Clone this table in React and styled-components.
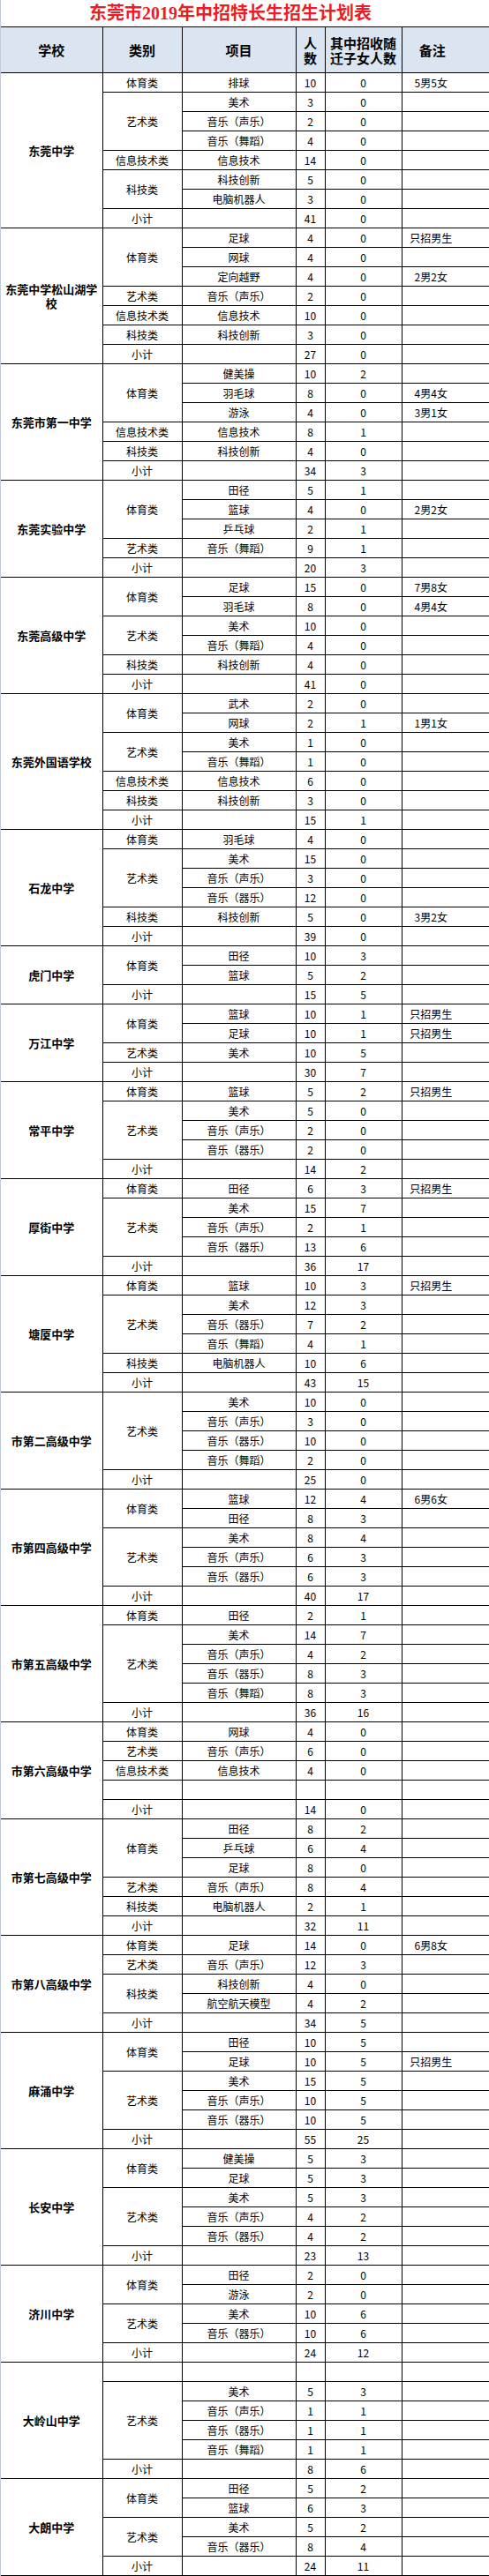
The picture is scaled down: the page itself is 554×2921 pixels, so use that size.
import React from "react";
import styled, { createGlobalStyle } from "styled-components";

const GlobalStyle = createGlobalStyle`
  html, body {
    margin: 0;
    padding: 0;
    background: #fff;
  }
`;

const Page = styled.div`
  width: 554px;
  border-left: 1px solid #c3ccd6;
  box-sizing: border-box;
`;

const Table = styled.table`
  width: 553px;
  border-collapse: collapse;
  table-layout: fixed;
  font-family: "Noto Sans CJK SC", sans-serif;
  color: #000;
`;

const TitleCell = styled.td`
  height: 30px;
  padding: 0 33px 0 0;
  text-align: center;
  vertical-align: middle;
  font-family: "Liberation Serif", "Noto Sans CJK SC", serif;
  font-weight: bold;
  font-size: 20px;
  line-height: 22px;
  color: #ee1c25;
  border-bottom: 1px solid #000;
`;

const HeadRow = styled.tr`
  height: 52px;
  background: #dbe5f1;
`;

const HeadCell = styled.th`
  padding: 0 ${(p) => (p.$last ? "33px" : "3px")} 0 3px;
  border: 1px solid #000;
  border-left: ${(p) => (p.$first ? "none" : "1px solid #000")};
  border-right: ${(p) => (p.$last ? "none" : "1px solid #000")};
  font-size: 15px;
  font-weight: bold;
  line-height: 17px;
  text-align: center;
  vertical-align: middle;
  word-break: break-all;
`;

const Row = styled.tr`
  height: 22px;
`;

const SchoolCell = styled.td`
  padding: 0 2px;
  border-top: 1px solid #000;
  border-bottom: 1px solid #000;
  border-right: 1px solid #000;
  font-size: 13px;
  font-weight: bold;
  line-height: 16px;
  text-align: center;
  vertical-align: middle;
  word-break: break-all;
`;

const Cell = styled.td`
  padding: 0 ${(p) => (p.$note ? "33px" : "0")} 0 0;
  border: 1px solid #000;
  border-right: ${(p) => (p.$note ? "none" : "1px solid #000")};
  font-size: 12px;
  line-height: 14px;
  text-align: center;
  vertical-align: middle;
  white-space: nowrap;
`;

const schools = [
  {
    name: "东莞中学",
    groups: [
      ["体育类", [["排球", 10, 0, "5男5女"]]],
      ["艺术类", [["美术", 3, 0], ["音乐（声乐）", 2, 0], ["音乐（舞蹈）", 4, 0]]],
      ["信息技术类", [["信息技术", 14, 0]]],
      ["科技类", [["科技创新", 5, 0], ["电脑机器人", 3, 0]]],
    ],
    total: [41, 0],
  },
  {
    name: "东莞中学松山湖学校",
    groups: [
      ["体育类", [["足球", 4, 0, "只招男生"], ["网球", 4, 0], ["定向越野", 4, 0, "2男2女"]]],
      ["艺术类", [["音乐（声乐）", 2, 0]]],
      ["信息技术类", [["信息技术", 10, 0]]],
      ["科技类", [["科技创新", 3, 0]]],
    ],
    total: [27, 0],
  },
  {
    name: "东莞市第一中学",
    groups: [
      ["体育类", [["健美操", 10, 2], ["羽毛球", 8, 0, "4男4女"], ["游泳", 4, 0, "3男1女"]]],
      ["信息技术类", [["信息技术", 8, 1]]],
      ["科技类", [["科技创新", 4, 0]]],
    ],
    total: [34, 3],
  },
  {
    name: "东莞实验中学",
    groups: [
      ["体育类", [["田径", 5, 1], ["篮球", 4, 0, "2男2女"], ["乒乓球", 2, 1]]],
      ["艺术类", [["音乐（舞蹈）", 9, 1]]],
    ],
    total: [20, 3],
  },
  {
    name: "东莞高级中学",
    groups: [
      ["体育类", [["足球", 15, 0, "7男8女"], ["羽毛球", 8, 0, "4男4女"]]],
      ["艺术类", [["美术", 10, 0], ["音乐（舞蹈）", 4, 0]]],
      ["科技类", [["科技创新", 4, 0]]],
    ],
    total: [41, 0],
  },
  {
    name: "东莞外国语学校",
    groups: [
      ["体育类", [["武术", 2, 0], ["网球", 2, 1, "1男1女"]]],
      ["艺术类", [["美术", 1, 0], ["音乐（舞蹈）", 1, 0]]],
      ["信息技术类", [["信息技术", 6, 0]]],
      ["科技类", [["科技创新", 3, 0]]],
    ],
    total: [15, 1],
  },
  {
    name: "石龙中学",
    groups: [
      ["体育类", [["羽毛球", 4, 0]]],
      ["艺术类", [["美术", 15, 0], ["音乐（声乐）", 3, 0], ["音乐（器乐）", 12, 0]]],
      ["科技类", [["科技创新", 5, 0, "3男2女"]]],
    ],
    total: [39, 0],
  },
  {
    name: "虎门中学",
    groups: [["体育类", [["田径", 10, 3], ["篮球", 5, 2]]]],
    total: [15, 5],
  },
  {
    name: "万江中学",
    groups: [
      ["体育类", [["篮球", 10, 1, "只招男生"], ["足球", 10, 1, "只招男生"]]],
      ["艺术类", [["美术", 10, 5]]],
    ],
    total: [30, 7],
  },
  {
    name: "常平中学",
    groups: [
      ["体育类", [["篮球", 5, 2, "只招男生"]]],
      ["艺术类", [["美术", 5, 0], ["音乐（声乐）", 2, 0], ["音乐（器乐）", 2, 0]]],
    ],
    total: [14, 2],
  },
  {
    name: "厚街中学",
    groups: [
      ["体育类", [["田径", 6, 3, "只招男生"]]],
      ["艺术类", [["美术", 15, 7], ["音乐（声乐）", 2, 1], ["音乐（器乐）", 13, 6]]],
    ],
    total: [36, 17],
  },
  {
    name: "塘厦中学",
    groups: [
      ["体育类", [["篮球", 10, 3, "只招男生"]]],
      ["艺术类", [["美术", 12, 3], ["音乐（器乐）", 7, 2], ["音乐（舞蹈）", 4, 1]]],
      ["科技类", [["电脑机器人", 10, 6]]],
    ],
    total: [43, 15],
  },
  {
    name: "市第二高级中学",
    groups: [
      [
        "艺术类",
        [["美术", 10, 0], ["音乐（声乐）", 3, 0], ["音乐（器乐）", 10, 0], ["音乐（舞蹈）", 2, 0]],
      ],
    ],
    total: [25, 0],
  },
  {
    name: "市第四高级中学",
    groups: [
      ["体育类", [["篮球", 12, 4, "6男6女"], ["田径", 8, 3]]],
      ["艺术类", [["美术", 8, 4], ["音乐（声乐）", 6, 3], ["音乐（器乐）", 6, 3]]],
    ],
    total: [40, 17],
  },
  {
    name: "市第五高级中学",
    groups: [
      ["体育类", [["田径", 2, 1]]],
      [
        "艺术类",
        [["美术", 14, 7], ["音乐（声乐）", 4, 2], ["音乐（器乐）", 8, 3], ["音乐（舞蹈）", 8, 3]],
      ],
    ],
    total: [36, 16],
  },
  {
    name: "市第六高级中学",
    groups: [
      ["体育类", [["网球", 4, 0]]],
      ["艺术类", [["音乐（声乐）", 6, 0]]],
      ["信息技术类", [["信息技术", 4, 0]]],
      ["", [["", "", ""]]],
    ],
    total: [14, 0],
  },
  {
    name: "市第七高级中学",
    groups: [
      ["体育类", [["田径", 8, 2], ["乒乓球", 6, 4], ["足球", 8, 0]]],
      ["艺术类", [["音乐（声乐）", 8, 4]]],
      ["科技类", [["电脑机器人", 2, 1]]],
    ],
    total: [32, 11],
  },
  {
    name: "市第八高级中学",
    groups: [
      ["体育类", [["足球", 14, 0, "6男8女"]]],
      ["艺术类", [["音乐（声乐）", 12, 3]]],
      ["科技类", [["科技创新", 4, 0], ["航空航天模型", 4, 2]]],
    ],
    total: [34, 5],
  },
  {
    name: "麻涌中学",
    groups: [
      ["体育类", [["田径", 10, 5], ["足球", 10, 5, "只招男生"]]],
      ["艺术类", [["美术", 15, 5], ["音乐（声乐）", 10, 5], ["音乐（器乐）", 10, 5]]],
    ],
    total: [55, 25],
  },
  {
    name: "长安中学",
    groups: [
      ["体育类", [["健美操", 5, 3], ["足球", 5, 3]]],
      ["艺术类", [["美术", 5, 3], ["音乐（声乐）", 4, 2], ["音乐（器乐）", 4, 2]]],
    ],
    total: [23, 13],
  },
  {
    name: "济川中学",
    groups: [
      ["体育类", [["田径", 2, 0], ["游泳", 2, 0]]],
      ["艺术类", [["美术", 10, 6], ["音乐（器乐）", 10, 6]]],
    ],
    total: [24, 12],
  },
  {
    name: "大岭山中学",
    groups: [
      ["", [["", "", ""]]],
      [
        "艺术类",
        [["美术", 5, 3], ["音乐（声乐）", 1, 1], ["音乐（器乐）", 1, 1], ["音乐（舞蹈）", 1, 1]],
      ],
    ],
    total: [8, 6],
  },
  {
    name: "大朗中学",
    groups: [
      ["体育类", [["田径", 5, 2], ["篮球", 6, 3]]],
      ["艺术类", [["美术", 5, 2], ["音乐（器乐）", 8, 4]]],
    ],
    total: [24, 11],
  },
];

function SchoolRows({ school }) {
  const span =
    school.groups.reduce((n, [, items]) => n + items.length, 0) + 1;
  const rows = [];
  school.groups.forEach(([cat, items], g) => {
    items.forEach(([item, count, sub, note], i) => {
      rows.push(
        <Row key={`${g}-${i}`}>
          {rows.length === 0 && (
            <SchoolCell rowSpan={span}>{school.name}</SchoolCell>
          )}
          {i === 0 && <Cell rowSpan={items.length}>{cat}</Cell>}
          <Cell>{item}</Cell>
          <Cell>{count}</Cell>
          <Cell>{sub}</Cell>
          <Cell $note>{note || ""}</Cell>
        </Row>
      );
    });
  });
  rows.push(
    <Row key="total">
      <Cell>小计</Cell>
      <Cell></Cell>
      <Cell>{school.total[0]}</Cell>
      <Cell>{school.total[1]}</Cell>
      <Cell $note></Cell>
    </Row>
  );
  return rows;
}

export default function App() {
  return (
    <>
      <GlobalStyle />
      <Page>
        <Table>
          <colgroup>
            <col style={{ width: 115 }} />
            <col style={{ width: 90 }} />
            <col style={{ width: 129 }} />
            <col style={{ width: 33 }} />
            <col style={{ width: 87 }} />
            <col style={{ width: 99 }} />
          </colgroup>
          <tbody>
            <tr>
              <TitleCell colSpan={6}>东莞市2019年中招特长生招生计划表</TitleCell>
            </tr>
            <HeadRow>
              <HeadCell $first>学校</HeadCell>
              <HeadCell>类别</HeadCell>
              <HeadCell>项目</HeadCell>
              <HeadCell>人数</HeadCell>
              <HeadCell>其中招收随迁子女人数</HeadCell>
              <HeadCell $last>备注</HeadCell>
            </HeadRow>
            {schools.map((s) => (
              <SchoolRows key={s.name} school={s} />
            ))}
          </tbody>
        </Table>
      </Page>
    </>
  );
}
